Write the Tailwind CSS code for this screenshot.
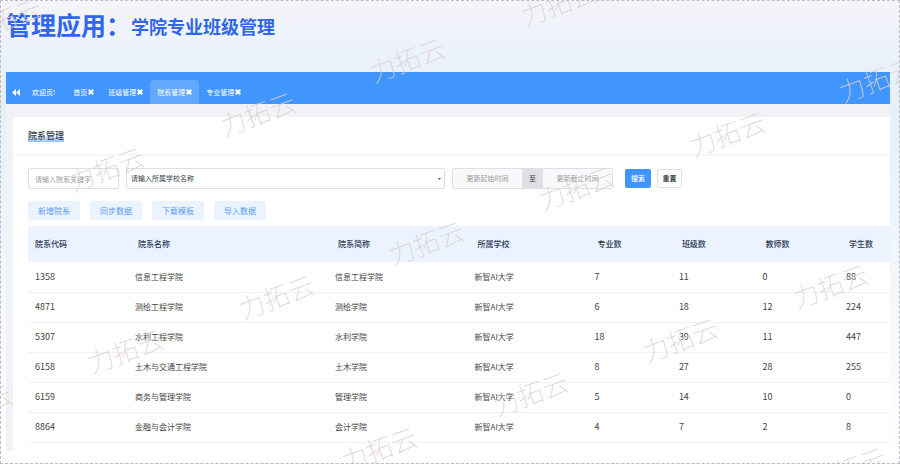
<!DOCTYPE html>
<html lang="zh-CN">
<head>
    <meta charset="UTF-8">
    <meta name="viewport" content="width=device-width, initial-scale=1.0">
    <title>院系管理</title>
    <script src="https://cdn.jsdelivr.net/npm/@tailwindcss/browser@4"></script>
</head>
<body class="font-['Noto_Sans_CJK_SC',sans-serif] text-[#444]">
<div class="relative min-h-screen overflow-hidden border border-dashed border-[#b9bcc2] bg-linear-to-b from-[#f4f5fa] via-[#e5eff8] via-20% to-white pl-[5px] pr-[9px] pb-3">
    <header class="flex h-[71px] items-start pt-[7px] font-bold leading-8 text-[#2f66ea]">
        <h1 class="text-[25px]">管理应用：</h1>
        <h2 class="pt-[2px] text-[18px]">学院专业班级管理</h2>
    </header>

    <nav class="flex h-8 items-end bg-[#4096fd] text-[7px] leading-6 text-white">
        <button class="flex h-6 w-[19px] items-center justify-center" aria-label="向左">
            <svg class="h-[7px] w-[8px]" viewBox="0 0 8 7" fill="currentColor"><path d="M4 0v7L0 3.5zM8 0v7L4 3.5z"/></svg>
        </button>
        <a href="#" class="px-[7px]">欢迎页!</a>
        <a href="#" class="ml-1 flex items-center gap-px px-[7px]">首页
            <svg class="size-[6px]" viewBox="0 0 6 6" stroke="currentColor" stroke-width="2"><path d="M.7.7l4.6 4.6M5.3.7L.7 5.3"/></svg>
        </a>
        <a href="#" class="flex items-center gap-px px-[7px]">班级管理
            <svg class="size-[6px]" viewBox="0 0 6 6" stroke="currentColor" stroke-width="2"><path d="M.7.7l4.6 4.6M5.3.7L.7 5.3"/></svg>
        </a>
        <a href="#" class="flex items-center gap-px rounded-t bg-[#62a9fd] px-[7px]">院系管理
            <svg class="size-[6px]" viewBox="0 0 6 6" stroke="currentColor" stroke-width="2"><path d="M.7.7l4.6 4.6M5.3.7L.7 5.3"/></svg>
        </a>
        <a href="#" class="flex items-center gap-px px-[7px]">专业管理
            <svg class="size-[6px]" viewBox="0 0 6 6" stroke="currentColor" stroke-width="2"><path d="M.7.7l4.6 4.6M5.3.7L.7 5.3"/></svg>
        </a>
    </nav>

    <main class="bg-[#f0f2f6] pl-[7px] pt-[13px]">
        <section class="rounded-tl bg-white pb-2">
            <div class="flex h-[39px] items-center border-b-2 border-[#f6f6f7] pl-[15px]">
                <h3 class="bg-linear-to-t from-[#8fc0f8] to-transparent to-60% text-[9px] font-medium leading-3 text-[#333b4d]">院系管理</h3>
            </div>

            <form class="flex items-center pl-[15px] pt-3 text-[7px]">
                <input type="text" aria-label="院系关键字" placeholder="请输入院系关键字" class="h-[21px] w-[91px] rounded-xs border border-[#dcdfe6] px-[6px] placeholder:text-[#999]">
                <div class="relative ml-[7px] w-[319px]">
                    <select aria-label="所属学校" class="h-[21px] w-full appearance-none rounded-xs border border-[#dcdfe6] bg-white px-1 text-[#333b4d]">
                        <option>请输入所属学校名称</option>
                    </select>
                    <svg class="pointer-events-none absolute right-1 top-[10px] h-[2px] w-[3px]" viewBox="0 0 3 2" fill="#555"><path d="M0 0h3L1.5 2z"/></svg>
                </div>
                <div class="ml-[7px] flex h-[21px] w-[161px] items-center rounded-xs border border-[#dcdfe6] bg-[#f8f9fb]">
                    <input type="text" aria-label="更新起始时间" placeholder="更新起始时间" class="w-0 grow text-center placeholder:text-[#999]">
                    <span class="w-[21px] bg-[#dfe0e3] text-center leading-[19px] text-[#333]">至</span>
                    <input type="text" aria-label="更新截止时间" placeholder="更新截止时间" class="w-0 grow text-center placeholder:text-[#999]">
                </div>
                <button type="button" class="ml-3 h-[19px] w-[26px] rounded-xs bg-[#4096fd] font-medium text-white">搜索</button>
                <button type="button" class="ml-[6px] h-[19px] w-[25px] rounded-xs border border-[#dcdfe6] font-medium text-[#222]">重置</button>
            </form>

            <div class="flex gap-[10px] pl-[15px] pt-3 text-[8px] leading-[19px] text-[#5a9ff5]">
                <button class="w-[52px] rounded-xs bg-[#eaf3fe]">新增院系</button>
                <button class="w-[52px] rounded-xs bg-[#eaf3fe]">同步数据</button>
                <button class="w-[52px] rounded-xs bg-[#eaf3fe]">下载模板</button>
                <button class="w-[52px] rounded-xs bg-[#eaf3fe]">导入数据</button>
            </div>

            <div class="pl-[15px] pt-[6px]">
                <table class="w-full table-fixed text-left text-[8px] leading-3">
                    <colgroup>
                        <col class="w-[11.6%]"><col class="w-[23.2%]"><col class="w-[16.2%]"><col class="w-[13.9%]">
                        <col class="w-[9.8%]"><col class="w-[9.7%]"><col class="w-[9.7%]"><col>
                    </colgroup>
                    <thead class="bg-[#eaf3fe] text-[#2c3654] [&_th]:h-9 [&_th]:pl-[10px] [&_th]:font-medium [&_th:first-child]:pl-[7px]">
                        <tr><th>院系代码</th><th>院系名称</th><th>院系简称</th><th>所属学校</th><th>专业数</th><th>班级数</th><th>教师数</th><th>学生数</th></tr>
                    </thead>
                    <tbody class="[&_td]:h-[30px] [&_td]:border-b [&_td]:border-[#eff1f3] [&_td]:pl-[7px] [&_td:first-child]:text-[9px] [&_td:nth-child(n+5)]:text-[9px]">
                        <tr><td>1358</td><td>信息工程学院</td><td>信息工程学院</td><td>新智AI大学</td><td>7</td><td>11</td><td>0</td><td>88</td></tr>
                        <tr><td>4871</td><td>测绘工程学院</td><td>测绘学院</td><td>新智AI大学</td><td>6</td><td>18</td><td>12</td><td>224</td></tr>
                        <tr><td>5307</td><td>水利工程学院</td><td>水利学院</td><td>新智AI大学</td><td>18</td><td>39</td><td>11</td><td>447</td></tr>
                        <tr><td>6158</td><td>土木与交通工程学院</td><td>土木学院</td><td>新智AI大学</td><td>8</td><td>27</td><td>28</td><td>255</td></tr>
                        <tr><td>6159</td><td>商务与管理学院</td><td>管理学院</td><td>新智AI大学</td><td>5</td><td>14</td><td>10</td><td>0</td></tr>
                        <tr><td>8864</td><td>金融与会计学院</td><td>会计学院</td><td>新智AI大学</td><td>4</td><td>7</td><td>2</td><td>8</td></tr>
                    </tbody>
                </table>
            </div>
        </section>
    </main>

    <!-- watermark -->
    <div aria-hidden="true" class="pointer-events-none absolute inset-0 text-[26px] font-thin leading-none text-[#dccfd2] select-none [&_span]:absolute [&_span]:-translate-1/2 [&_span]:-rotate-20 [&_span]:whitespace-nowrap">
        <span class="left-[2px] top-[18px]">力拓云</span>
        <span class="left-[557px] top-[2px]">力拓云</span>
        <span class="left-[406px] top-[58px]">力拓云</span>
        <span class="left-[256px] top-[112px]">力拓云</span>
        <span class="left-[105px] top-[167px]">力拓云</span>
        <span class="left-[875px] top-[78px]">力拓云</span>
        <span class="left-[726px] top-[132px]">力拓云</span>
        <span class="left-[575px] top-[186px]">力拓云</span>
        <span class="left-[425px] top-[241px]">力拓云</span>
        <span class="left-[275px] top-[295px]">力拓云</span>
        <span class="left-[124px] top-[349px]">力拓云</span>
        <span class="left-[-27px] top-[404px]">力拓云</span>
        <span class="left-[829px] top-[284px]">力拓云</span>
        <span class="left-[679px] top-[338px]">力拓云</span>
        <span class="left-[529px] top-[392px]">力拓云</span>
        <span class="left-[378px] top-[447px]">力拓云</span>
        <span class="left-[847px] top-[467px]">力拓云</span>
    </div>
</div>
</body>
</html>
